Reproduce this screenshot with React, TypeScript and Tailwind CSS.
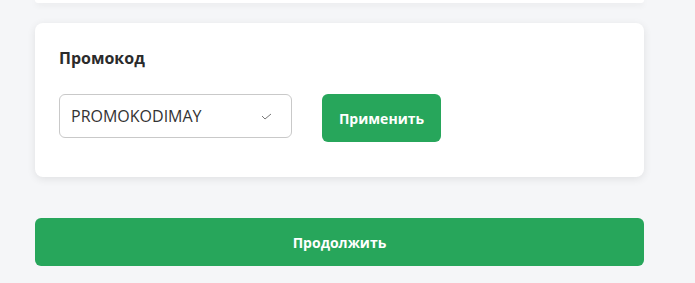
export default function App() {
  return (
    <div className="min-h-[283px] w-full bg-[#f5f6f8] pl-[35px] pr-[51px] font-['Open_Sans',sans-serif]">
      <div className="h-[3px] rounded-b-lg bg-white shadow-[0_2px_6px_rgba(0,0,0,0.08)]" />
      <div className="mt-[20px] rounded-lg bg-white pl-[24px] pr-6 pt-[24px] pb-[35px] shadow-[0_2px_8px_rgba(0,0,0,0.09)]">
        <div className="text-[16px] font-bold leading-[22px] text-[#2b2b2b]">Промокод</div>
        <div className="mt-[25px] flex items-start gap-[30px]">
          <div className="flex h-[44px] w-[233px] items-center justify-between rounded-md border border-[#c9c9c9] pl-[11px] pr-[19px]">
            <span className="text-[16px] text-[#333]">PROMOKODIMAY</span>
            <svg width="11" height="7" viewBox="0 0 11 7" fill="none">
              <path d="M1 3L4 6L10 1" stroke="#777" strokeWidth="1" />
            </svg>
          </div>
          <button className="h-[48px] w-[119px] rounded-md bg-[#27a65b] text-[14px] font-bold text-white">
            Применить
          </button>
        </div>
      </div>
      <button className="mt-[41px] h-[48px] w-full rounded-md bg-[#27a65b] text-[14px] font-bold text-white">
        Продолжить
      </button>
    </div>
  );
}
